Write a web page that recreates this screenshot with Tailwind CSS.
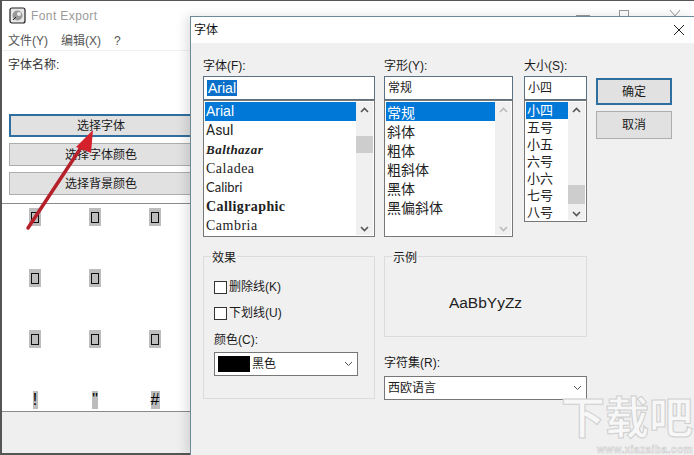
<!DOCTYPE html>
<html lang="zh"><head><meta charset="utf-8">
<script src="https://cdn.jsdelivr.net/npm/@tailwindcss/browser@4"></script>
</head>
<body class="m-0">
<div class="relative w-[694px] h-[455px] overflow-hidden bg-white font-['Liberation_Sans','Noto_Sans_CJK_SC',sans-serif] text-[12px] text-[#1a1a1a]">

<!-- main window -->
<div class="absolute left-0 top-0 w-[694px] h-[455px] flex flex-col bg-white border-l-2 border-t border-[#555]">
  <div class="h-[29px] shrink-0 flex items-center gap-[5px] pl-[7px]">
    <svg width="17" height="17" viewBox="0 0 17 17"><rect x="1" y="1" width="15" height="15" rx="2" fill="#e8e8e8" stroke="#222" stroke-width="1.2"/><circle cx="8.5" cy="8.5" r="5" fill="#999"/><circle cx="10" cy="7" r="2" fill="#eee"/><path d="M4 13l3-3" stroke="#222"/></svg>
    <span class="text-[12px] tracking-[0.4px] text-[#9a9a9a]">Font Export</span>
    <div class="flex-1"></div>
    <div class="w-[124px] h-[16px] mt-[-14px] relative">
      <i class="absolute left-[6px] top-[14px] block w-[14px] h-px bg-[#999]"></i>
      <i class="absolute left-[49px] top-[9px] block w-[10px] h-[7px] border border-b-0 border-[#999]"></i>
      <svg class="absolute left-[99px] top-[9px]" width="12" height="7" viewBox="0 0 12 7"><path d="M1 0l5 6 5-6" fill="none" stroke="#999"/></svg>
    </div>
  </div>
  <div class="h-[20px] shrink-0 flex items-center gap-[13px] pl-[6px] pt-[2px] text-[#555]"><span>文件(Y)</span><span>编辑(X)</span><span>?</span></div>
  <div class="h-[64px] shrink-0 border-t border-[#f0f0f0] pl-[6px] pt-[5px] text-[#333]">字体名称:</div>
  <div class="flex flex-col gap-[6px] pl-[7px]">
    <div class="h-[23px] w-[184px] border-2 border-[#2f6f9f] bg-[#e1e1e1] flex items-center justify-center">选择字体</div>
    <div class="h-[23px] w-[184px] border border-[#adadad] bg-[#e1e1e1] flex items-center justify-center">选择字体颜色</div>
    <div class="h-[23px] w-[184px] border border-[#adadad] bg-[#e1e1e1] flex items-center justify-center">选择背景颜色</div>
  </div>
  <div class="mt-[8px] h-[209px] shrink-0 border-y border-[#8a8a8a] grid grid-cols-[60px_60px_60px] grid-rows-[61px_61px_61px_21px] pl-[3px] pt-[4px] justify-start">
    <div class="flex justify-center"><span class="w-[12px] h-[18px] bg-[#bdbdbd] flex items-center justify-center"><i class="block w-[8px] h-[11px] border border-[#111]"></i></span></div>
    <div class="flex justify-center"><span class="w-[12px] h-[18px] bg-[#bdbdbd] flex items-center justify-center"><i class="block w-[8px] h-[11px] border border-[#111]"></i></span></div>
    <div class="flex justify-center"><span class="w-[12px] h-[18px] bg-[#bdbdbd] flex items-center justify-center"><i class="block w-[8px] h-[11px] border border-[#111]"></i></span></div>
    <div class="flex justify-center"><span class="w-[12px] h-[18px] bg-[#bdbdbd] flex items-center justify-center"><i class="block w-[8px] h-[11px] border border-[#111]"></i></span></div>
    <div class="flex justify-center"><span class="w-[12px] h-[18px] bg-[#bdbdbd] flex items-center justify-center"><i class="block w-[8px] h-[11px] border border-[#111]"></i></span></div>
    <div></div>
    <div class="flex justify-center"><span class="w-[12px] h-[18px] bg-[#bdbdbd] flex items-center justify-center"><i class="block w-[8px] h-[11px] border border-[#111]"></i></span></div>
    <div class="flex justify-center"><span class="w-[12px] h-[18px] bg-[#bdbdbd] flex items-center justify-center"><i class="block w-[8px] h-[11px] border border-[#111]"></i></span></div>
    <div class="flex justify-center"><span class="w-[12px] h-[18px] bg-[#bdbdbd] flex items-center justify-center"><i class="block w-[8px] h-[11px] border border-[#111]"></i></span></div>
    <div class="flex justify-center"><span class="w-[5px] h-[18px] bg-[#bdbdbd] flex items-center justify-center text-[16px] text-black leading-[18px]">!</span></div>
    <div class="flex justify-center"><span class="w-[6px] h-[18px] bg-[#bdbdbd] flex items-center justify-center text-[16px] text-black leading-[18px]">"</span></div>
    <div class="flex justify-center"><span class="w-[9px] h-[18px] bg-[#bdbdbd] flex items-center justify-center text-[16px] text-black leading-[18px]">#</span></div>
  </div>
  <div class="flex-1 bg-[#efefef] border-b-2 border-[#555]"></div>
</div>

<!-- arrow -->
<svg class="absolute left-0 top-0 pointer-events-none" width="190" height="240" viewBox="0 0 190 240">
  <path d="M28 228L84 143" stroke="#b5202a" stroke-width="3.5" stroke-linecap="round"/>
  <path d="M93 130L76 147L91 153Z" fill="#d4212b"/>
</svg>

<!-- dialog -->
<div class="absolute left-[190px] top-[16px] w-[504px] h-[439px] flex flex-col bg-[#f0f0f0] border-l border-t border-[#6d8a9a] shadow-[-4px_0_10px_rgba(0,0,0,0.12)]">
  <div class="h-[26px] shrink-0 bg-white flex items-center justify-between pl-[3px] pr-[9px]">
    <span class="text-[12px] text-[#111]">字体</span>
    <svg width="12" height="12" viewBox="0 0 12 12"><path d="M1 1l10 10M11 1L1 11" stroke="#222" stroke-width="1"/></svg>
  </div>
  <div class="flex pl-[12px] pt-[10px] items-start">
    <!-- font -->
    <div class="w-[172px] mr-[9px] flex flex-col">
      <div class="h-[23px] pt-[3px] flex items-center">字体(F):</div>
      <div class="h-[24px] border border-[#5b7183] bg-white flex items-center pl-[3px] text-[14px]"><span class="bg-[#0a6fc9] text-white px-px leading-[16px]">Arial</span></div>
      <div class="h-[137px] border border-[#777] bg-white flex p-px">
        <div class="w-[151px] flex flex-col text-[14px] text-[#222]">
          <div class="h-[19px] bg-[#0078d7] text-white leading-[19px] pl-px">Arial</div>
          <div class="h-[19px] leading-[19px] pl-px font-['Roboto']">Asul</div>
          <div class="h-[19px] leading-[19px] pl-px font-['Liberation_Serif'] italic font-bold text-[13px] tracking-[0.5px]">Balthazar</div>
          <div class="h-[19px] leading-[19px] pl-px font-['Liberation_Serif'] tracking-[0.5px]">Caladea</div>
          <div class="h-[19px] leading-[19px] pl-px font-['Lato'] text-[13px]">Calibri</div>
          <div class="h-[19px] leading-[19px] pl-px font-['Liberation_Serif'] font-bold tracking-[0.4px]">Calligraphic</div>
          <div class="h-[19px] leading-[19px] pl-px font-['Liberation_Serif'] tracking-[0.5px]">Cambria</div>
        </div>
        <div class="flex-1 bg-[#f0f0f0] flex flex-col items-center justify-between py-[3px] relative">
          <svg width="9" height="6" viewBox="0 0 9 6" class="mt-[2px]"><path d="M1 5l3.5-3.5L8 5" fill="none" stroke="#555" stroke-width="1.6"/></svg>
          <div class="absolute left-0 right-0 top-[34px] h-[17px] bg-[#cdcdcd]"></div>
          <svg width="9" height="6" viewBox="0 0 9 6"><path d="M1 1l3.5 3.5L8 1" fill="none" stroke="#555" stroke-width="1.6"/></svg>
        </div>
      </div>
    </div>
    <!-- style -->
    <div class="w-[129px] mr-[11px] flex flex-col">
      <div class="h-[23px] pt-[3px] flex items-center">字形(Y):</div>
      <div class="h-[24px] border border-[#5b7183] bg-white flex items-center pl-[3px] text-[12px]">常规</div>
      <div class="h-[137px] border border-[#777] bg-white flex p-px">
        <div class="w-[109px] flex flex-col text-[14px] text-[#222]">
          <div class="h-[19px] bg-[#0078d7] text-white leading-[23px] pl-px">常规</div>
          <div class="h-[19px] leading-[23px] pl-px">斜体</div>
          <div class="h-[19px] leading-[23px] pl-px">粗体</div>
          <div class="h-[19px] leading-[23px] pl-px">粗斜体</div>
          <div class="h-[19px] leading-[23px] pl-px">黑体</div>
          <div class="h-[19px] leading-[23px] pl-px">黑偏斜体</div>
        </div>
        <div class="flex-1 bg-[#f0f0f0] flex flex-col items-center justify-between py-[3px]">
          <svg width="9" height="6" viewBox="0 0 9 6" class="mt-[2px]"><path d="M1 5l3.5-3.5L8 5" fill="none" stroke="#bbb" stroke-width="1.6"/></svg>
          <svg width="9" height="6" viewBox="0 0 9 6"><path d="M1 1l3.5 3.5L8 1" fill="none" stroke="#bbb" stroke-width="1.6"/></svg>
        </div>
      </div>
    </div>
    <!-- size -->
    <div class="w-[63px] mr-[9px] flex flex-col">
      <div class="h-[23px] pt-[3px] flex items-center">大小(S):</div>
      <div class="h-[24px] border border-[#5b7183] bg-white flex items-center pl-[3px] text-[12px]">小四</div>
      <div class="h-[122px] border border-[#777] bg-white flex p-px">
        <div class="w-[42px] flex flex-col text-[13px] text-[#222]">
          <div class="h-[17px] bg-[#0078d7] text-white leading-[17px] pl-px">小四</div>
          <div class="h-[17px] leading-[17px] pl-px">五号</div>
          <div class="h-[17px] leading-[17px] pl-px">小五</div>
          <div class="h-[17px] leading-[17px] pl-px">六号</div>
          <div class="h-[17px] leading-[17px] pl-px">小六</div>
          <div class="h-[17px] leading-[17px] pl-px">七号</div>
          <div class="h-[17px] leading-[17px] pl-px">八号</div>
        </div>
        <div class="flex-1 bg-[#f0f0f0] flex flex-col items-center justify-between py-[3px] relative">
          <svg width="9" height="6" viewBox="0 0 9 6" class="mt-[2px]"><path d="M1 5l3.5-3.5L8 5" fill="none" stroke="#555" stroke-width="1.6"/></svg>
          <div class="absolute left-0 right-0 top-[83px] h-[19px] bg-[#cdcdcd]"></div>
          <svg width="9" height="6" viewBox="0 0 9 6"><path d="M1 1l3.5 3.5L8 1" fill="none" stroke="#555" stroke-width="1.6"/></svg>
        </div>
      </div>
    </div>
    <!-- buttons -->
    <div class="w-[76px] pt-[25px] flex flex-col gap-[6px]">
      <div class="h-[27px] border-2 border-[#2f6f9f] bg-[#e1e1e1] flex items-center justify-center">确定</div>
      <div class="h-[28px] border border-[#adadad] bg-[#e1e1e1] flex items-center justify-center">取消</div>
    </div>
  </div>

  <div class="flex pl-[12px] pt-[19px] items-start">
    <!-- effects -->
    <div class="relative w-[172px] h-[143px] mr-[9px] border border-[#dcdcdc] flex flex-col pl-[10px] pt-[23px]">
      <span class="absolute left-[7px] top-[-6px] bg-[#f0f0f0] px-px leading-[14px]">效果</span>
      <label class="h-[14px] flex items-center gap-[2px]"><i class="block w-[13px] h-[13px] border border-[#333] bg-white"></i>删除线(K)</label>
      <label class="h-[14px] mt-[12px] flex items-center gap-[2px]"><i class="block w-[13px] h-[13px] border border-[#333] bg-white"></i>下划线(U)</label>
      <div class="h-[14px] mt-[13px] flex items-center">颜色(C):</div>
      <div class="h-[24px] w-[144px] mt-[5px] border border-[#777] bg-white flex items-center pl-[3px] pr-[3px]">
        <i class="block w-[32px] h-[16px] bg-black mr-[2px]"></i><span class="flex-1">黑色</span>
        <svg width="9" height="6" viewBox="0 0 9 6" class="mr-[1px]"><path d="M1 1l3.5 3.5L8 1" fill="none" stroke="#555"/></svg>
      </div>
    </div>
    <!-- preview -->
    <div class="w-[203px] flex flex-col">
      <div class="relative h-[81px] border border-[#dcdcdc] flex items-center justify-center pt-[12px]">
        <span class="absolute left-[7px] top-[-6px] bg-[#f0f0f0] px-px leading-[14px]">示例</span>
        <span class="text-[15.5px] text-[#222]">AaBbYyZz</span>
      </div>
      <div class="h-[14px] mt-[19px] flex items-center">字符集(R):</div>
      <div class="h-[24px] mt-[6px] border border-[#777] bg-white flex items-center pl-[3px] pr-[4px]">
        <span class="flex-1">西欧语言</span>
        <svg width="9" height="6" viewBox="0 0 9 6"><path d="M1 1l3.5 3.5L8 1" fill="none" stroke="#555"/></svg>
      </div>
    </div>
  </div>
</div>

<!-- watermark -->
<div class="absolute right-[1px] top-[394px] flex flex-col items-end pointer-events-none">
  <span class="text-[44px] leading-[50px] font-bold text-[#f7f7f7] [-webkit-text-stroke:1px_#cfcfcf]">下载吧</span>
  <span class="text-[10px] leading-[11px] font-bold text-[#f7f7f7] [-webkit-text-stroke:0.5px_#c8c8c8] tracking-[0.5px]">www.xiazaiba.com</span>
</div>
</div>
</body></html>
